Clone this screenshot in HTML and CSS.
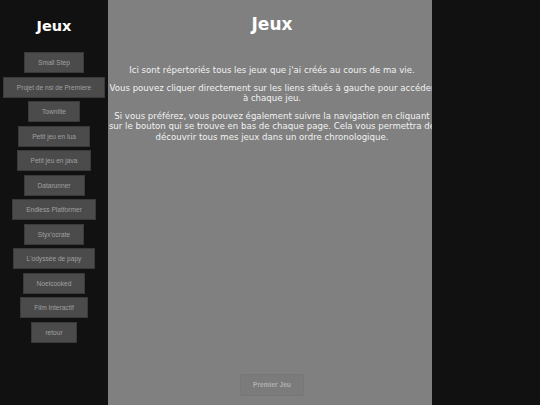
FILE: index.html
```html
<!DOCTYPE html>
<html lang="fr">
<head>
<meta charset="utf-8">
<title>Jeux</title>
<link rel="stylesheet" href="styles.css">
</head>
<body>
<div class="page">
  <aside class="side">
    <h2 class="side-title">Jeux</h2>
    <nav class="menu">
      <a class="menu-btn" href="#">Small Step</a>
      <a class="menu-btn" href="#">Projet de nsi de Premiere</a>
      <a class="menu-btn" href="#">Townlite</a>
      <a class="menu-btn" href="#">Petit jeu en lua</a>
      <a class="menu-btn" href="#">Petit jeu en java</a>
      <a class="menu-btn" href="#">Datarunner</a>
      <a class="menu-btn" href="#">Endless Platformer</a>
      <a class="menu-btn" href="#">Styx'ocrate</a>
      <a class="menu-btn" href="#">L'odyssée de papy</a>
      <a class="menu-btn" href="#">Noelcooked</a>
      <a class="menu-btn" href="#">Film Interactif</a>
      <a class="menu-btn" href="#">retour</a>
    </nav>
  </aside>
  <main class="main">
    <h1 class="main-title">Jeux</h1>
    <div class="content">
      <p>Ici sont répertoriés tous les jeux que j'ai créés au cours de ma vie.</p>
      <p>Vous pouvez cliquer directement sur les liens situés à gauche pour accéder à chaque jeu.</p>
      <p>Si vous préférez, vous pouvez également suivre la navigation en cliquant sur le bouton qui se trouve en bas de chaque page. Cela vous permettra de découvrir tous mes jeux dans un ordre chronologique.</p>
    </div>
    <a class="next-btn" href="#">Premier Jeu</a>
  </main>
  <aside class="side side-right"></aside>
</div>
</body>
</html>
```

FILE: styles.css
```css
html, body {
  margin: 0;
  padding: 0;
  height: 100%;
}
body {
  background: #111111;
  font-family: "DejaVu Sans", Verdana, sans-serif;
}
.page {
  display: grid;
  grid-template-columns: 108px 1fr 108px;
  height: 100vh;
}
.side {
  background: #111111;
  display: flex;
  flex-direction: column;
  align-items: center;
}
.side-title {
  color: #ffffff;
  font-family: "DejaVu Sans", Verdana, sans-serif;
  font-weight: bold;
  font-size: 14.5px;
  margin: 18px 0 17px;
  line-height: 17px;
}
.menu {
  display: flex;
  flex-direction: column;
  align-items: center;
  gap: 3.5px;
}
.menu-btn {
  display: block;
  background: #4b4b4b;
  border: 1px solid #3a3a3a;
  color: #a0a0a0;
  font-family: "Liberation Sans", Arial, sans-serif;
  font-size: 6.6px;
  line-height: 19px;
  padding: 0 13px;
  text-decoration: none;
  white-space: nowrap;
}
.main {
  background: #808080;
  display: flex;
  flex-direction: column;
  align-items: center;
  min-width: 0;
  margin-right: -4px;
}
.main-title {
  color: #ffffff;
  font-family: "DejaVu Sans", Verdana, sans-serif;
  font-weight: bold;
  font-size: 17px;
  line-height: 20px;
  margin: 14px 0 0;
}
.content {
  align-self: stretch;
  margin-top: 31px;
  color: #f2f2f2;
  font-size: 8.6px;
  line-height: 10.5px;
  text-align: center;
}
.content p {
  margin: 0 0 7px;
}
.next-btn {
  margin-top: auto;
  margin-bottom: 9px;
  background: #7b7b7b;
  border: 1px solid #777777;
  color: #b0b0b0;
  font-family: "Liberation Sans", Arial, sans-serif;
  font-weight: bold;
  font-size: 6.6px;
  line-height: 20px;
  padding: 0 12px;
  text-decoration: none;
}
```
